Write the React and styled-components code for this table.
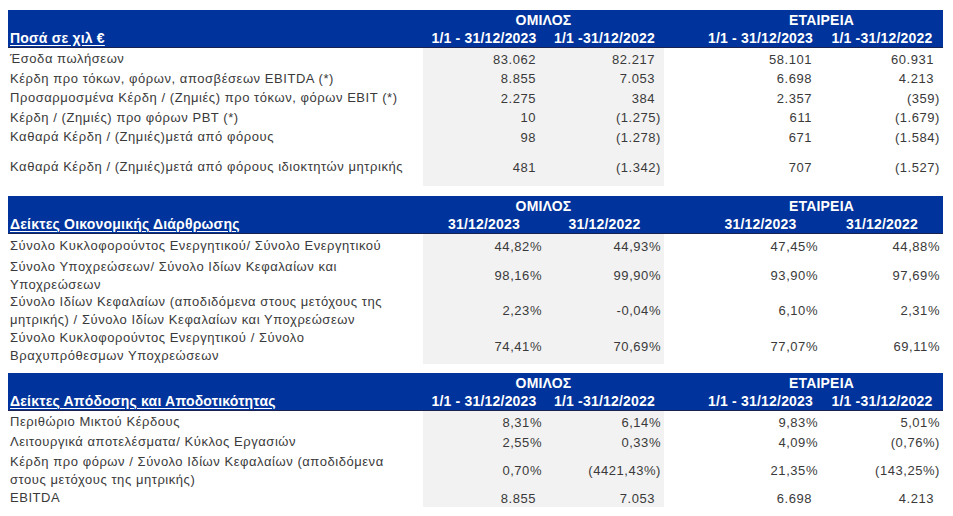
import React from 'react'
import styled, { createGlobalStyle } from 'styled-components'

const COLS = '415px 122px 119px 36px 121px 122px'

const GlobalStyle = createGlobalStyle`
  body {
    margin: 0;
    background: #fff;
    font-family: 'Liberation Sans', Arial, sans-serif;
  }
`

const Page = styled.div`
  width: 935px;
  padding: 10px 0 0 8px;
  display: flex;
  flex-direction: column;
`

const Section = styled.section`
  margin-top: ${p => p.$gap || 0}px;
`

const Head = styled.div`
  display: grid;
  grid-template-columns: ${COLS};
  grid-template-rows: 19px 18px;
  background: #00349c;
  color: #fff;
  font-size: 14px;
  font-weight: bold;
  letter-spacing: 0.2px;
  border-bottom: 1px solid #1a2350;
`

const HeadCell = styled.div`
  grid-column: ${p => p.$col} / span ${p => p.$span || 1};
  grid-row: ${p => p.$row};
  display: flex;
  align-items: center;
  justify-content: ${p => (p.$left ? 'flex-start' : 'center')};
  padding-left: ${p => p.$pl || 0}px;
  white-space: nowrap;
  text-decoration: ${p => (p.$underline ? 'underline' : 'none')};
  text-underline-offset: 2px;
`

const Row = styled.div`
  display: grid;
  grid-template-columns: ${COLS};
  height: ${p => p.$h}px;
  color: #3a3a3a;
  font-size: 13px;
  letter-spacing: 0.55px;
`

const Label = styled.div`
  display: flex;
  flex-direction: column;
  justify-content: center;
  padding-left: 2px;
  padding-top: 2px;
  line-height: 17.5px;
  white-space: nowrap;
`

const Value = styled.div`
  display: flex;
  align-items: center;
  justify-content: flex-end;
  padding-top: 2px;
  padding-right: ${p => (p.$acct ? 9 : 3)}px;
  background: ${p => (p.$shade ? '#f2f2f2' : 'transparent')};
  white-space: nowrap;
`

const tables = [
  {
    title: 'Ποσά σε χιλ €',
    heads: ['1/1 - 31/12/2023', '1/1 -31/12/2022', '1/1 - 31/12/2023', '1/1 -31/12/2022'],
    acct: true,
    rows: [
      { h: 20, label: ['Έσοδα πωλήσεων'], v: ['83.062', '82.217', '58.101', '60.931'] },
      { h: 19, label: ['Κέρδη προ τόκων, φόρων, αποσβέσεων EBITDA (*)'], v: ['8.855', '7.053', '6.698', '4.213'] },
      { h: 20, label: ['Προσαρμοσμένα Κέρδη / (Ζημιές) προ τόκων, φόρων EBIT (*)'], v: ['2.275', '384', '2.357', '(359)'] },
      { h: 19, label: ['Κέρδη / (Ζημιές) προ φόρων PBT (*)'], v: ['10', '(1.275)', '611', '(1.679)'] },
      { h: 20, label: ['Καθαρά Κέρδη / (Ζημιές)μετά από φόρους'], v: ['98', '(1.278)', '671', '(1.584)'] },
      { h: 40, label: ['Καθαρά Κέρδη / (Ζημιές)μετά από φόρους ιδιοκτητών μητρικής'], v: ['481', '(1.342)', '707', '(1.527)'] }
    ]
  },
  {
    title: 'Δείκτες Οικονομικής Διάρθρωσης',
    heads: ['31/12/2023', '31/12/2022', '31/12/2023', '31/12/2022'],
    gap: 10,
    rows: [
      { h: 22, label: ['Σύνολο Κυκλοφορούντος Ενεργητικού/ Σύνολο Ενεργητικού'], v: ['44,82%', '44,93%', '47,45%', '44,88%'] },
      { h: 35, label: ['Σύνολο Υποχρεώσεων/ Σύνολο Ιδίων Κεφαλαίων και', 'Υποχρεώσεων'], v: ['98,16%', '99,90%', '93,90%', '97,69%'] },
      { h: 36, label: ['Σύνολο Ιδίων Κεφαλαίων (αποδιδόμενα στους μετόχους της', 'μητρικής) / Σύνολο Ιδίων Κεφαλαίων και Υποχρεώσεων'], v: ['2,23%', '-0,04%', '6,10%', '2,31%'] },
      { h: 35, label: ['Σύνολο Κυκλοφορούντος Ενεργητικού / Σύνολο', 'Βραχυπρόθεσμων Υποχρεώσεων'], v: ['74,41%', '70,69%', '77,07%', '69,11%'] }
    ]
  },
  {
    title: 'Δείκτες Απόδοσης και Αποδοτικότητας',
    heads: ['1/1 - 31/12/2023', '1/1 -31/12/2022', '1/1 - 31/12/2023', '1/1 -31/12/2022'],
    gap: 11,
    rows: [
      { h: 20, label: ['Περιθώριο Μικτού Κέρδους'], v: ['8,31%', '6,14%', '9,83%', '5,01%'] },
      { h: 20, label: ['Λειτουργικά αποτελέσματα/ Κύκλος Εργασιών'], v: ['2,55%', '0,33%', '4,09%', '(0,76%)'] },
      { h: 36, label: ['Κέρδη προ φόρων / Σύνολο Ιδίων Κεφαλαίων (αποδιδόμενα', 'στους μετόχους της μητρικής)'], v: ['0,70%', '(4421,43%)', '21,35%', '(143,25%)'] },
      { h: 20, label: ['EBITDA'], v: ['8.855', '7.053', '6.698', '4.213'], acct: true }
    ]
  }
]

const isPlainNumber = s => !s.startsWith('(') && !s.endsWith('%')

const Table = ({ table }) => (
  <Section $gap={table.gap}>
    <Head>
      <HeadCell $row={1} $col={2} $span={2}>ΟΜΙΛΟΣ</HeadCell>
      <HeadCell $row={1} $col={5} $span={2}>ΕΤΑΙΡΕΙΑ</HeadCell>
      <HeadCell $row={2} $col={1} $left $pl={2} $underline>
        {table.title}
      </HeadCell>
      {table.heads.map((h, i) => (
        <HeadCell key={i} $row={2} $col={i < 2 ? i + 2 : i + 3}>
          {h}
        </HeadCell>
      ))}
    </Head>
    {table.rows.map((r, i) => {
      const acct = table.acct || r.acct
      return (
        <Row key={i} $h={r.h}>
          <Label>
            {r.label.map((l, j) => (
              <span key={j}>{l}</span>
            ))}
          </Label>
          <Value $shade $acct={acct && isPlainNumber(r.v[0])}>{r.v[0]}</Value>
          <Value $shade $acct={acct && isPlainNumber(r.v[1])}>{r.v[1]}</Value>
          <div />
          <Value $acct={acct && isPlainNumber(r.v[2])}>{r.v[2]}</Value>
          <Value $acct={acct && isPlainNumber(r.v[3])}>{r.v[3]}</Value>
        </Row>
      )
    })}
  </Section>
)

export default function App() {
  return (
    <>
      <GlobalStyle />
      <Page>
        {tables.map((t, i) => (
          <Table key={i} table={t} />
        ))}
      </Page>
    </>
  )
}
